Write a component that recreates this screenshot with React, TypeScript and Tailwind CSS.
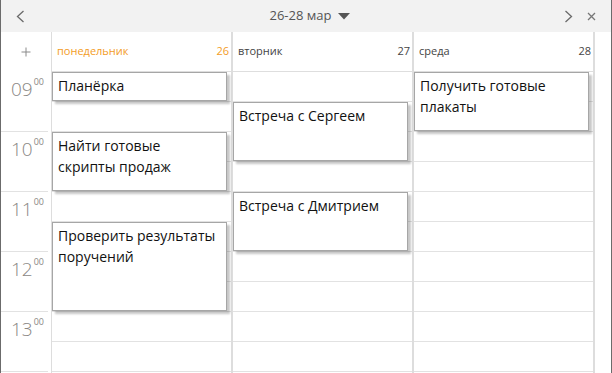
import React from 'react';

type CalEvent = { title: string; start: number; slots: number };

interface Day {
  name: string;
  num: number;
  today?: boolean;
  events: CalEvent[];
}

// start = half-hour slot from 09:00, slots = duration in half-hours
const days: Day[] = [
  {
    name: 'понедельник',
    num: 26,
    today: true,
    events: [
      { title: 'Планёрка', start: 0, slots: 1 },
      { title: 'Найти готовые скрипты продаж', start: 2, slots: 2 },
      { title: 'Проверить результаты поручений', start: 5, slots: 3 },
    ],
  },
  {
    name: 'вторник',
    num: 27,
    events: [
      { title: 'Встреча с Сергеем', start: 1, slots: 2 },
      { title: 'Встреча с Дмитрием', start: 4, slots: 2 },
    ],
  },
  {
    name: 'среда',
    num: 28,
    events: [{ title: 'Получить готовые плакаты', start: 0, slots: 2 }],
  },
];

const hours = ['09', '10', '11', '12', '13'];
const ROW = 30;

function Chevron({ dir }: { dir: 'left' | 'right' }) {
  return (
    <svg width="9" height="13" viewBox="0 0 9 13" fill="none">
      <polyline
        points={dir === 'left' ? '7.5,1 1.5,6.5 7.5,12' : '1.5,1 7.5,6.5 1.5,12'}
        stroke="#6a6a6a"
        strokeWidth="1.3"
      />
    </svg>
  );
}

function DayColumn({ day }: { day: Day }) {
  return (
    <div className="w-[181px] flex-shrink-0 border-r-2 border-[#dddddd] flex flex-col">
      <div
        className={`h-[40px] flex items-center justify-between pl-[5px] pr-[2px] border-b border-[#dedede] text-[11px] ${
          day.today ? 'text-[#f39c1f]' : 'text-[#444444]'
        }`}
      >
        <span>{day.name}</span>
        <span>{day.num}</span>
      </div>
      <div className="relative flex-1">
        {Array.from({ length: 11 }).map((_, i) => (
          <div key={i} className="h-[30px] border-b border-[#e2e2e2]" />
        ))}
        {day.events.map((ev) => (
          <div
            key={ev.title}
            className="absolute left-0 w-[175px] bg-white border border-[#a6a6a6] shadow-[3px_3px_2px_rgba(0,0,0,0.22)] pl-[5px] pt-[2px] pr-[6px] text-[14px] leading-[21px] text-[#111111] overflow-hidden"
            style={{ top: ev.start * ROW, height: ev.slots * ROW - 1 }}
          >
            {ev.title}
          </div>
        ))}
      </div>
    </div>
  );
}

export default function App() {
  return (
    <div
      className="w-[612px] h-[373px] overflow-hidden bg-white border-x border-[#6b6b6b] flex flex-col"
      style={{ fontFamily: '"Open Sans", "Noto Sans", sans-serif' }}
    >
      <div className="h-[32px] flex-shrink-0 bg-[#f2f2f2] flex items-center">
        <div className="w-[40px] pl-[15px] flex items-center">
          <Chevron dir="left" />
        </div>
        <div className="flex-1 flex items-center justify-center pl-[14px] text-[13px] text-[#555555]">
          <span>26-28 мар</span>
          <svg width="12" height="7" viewBox="0 0 12 7" className="ml-[6px]">
            <polygon points="0,0 12,0 6,6.5" fill="#555555" />
          </svg>
        </div>
        <div className="flex items-center pr-[15px] gap-[14px]">
          <Chevron dir="right" />
          <svg width="9" height="9" viewBox="0 0 9 9">
            <path d="M1 1 L8 8 M8 1 L1 8" stroke="#777777" strokeWidth="1.3" />
          </svg>
        </div>
      </div>

      <div className="flex flex-1">
        <div className="w-[51px] flex-shrink-0 border-r border-[#dddddd] flex flex-col">
          <div className="h-[40px] flex items-center justify-center">
            <svg width="10" height="10" viewBox="0 0 10 10">
              <path d="M5 0.5 V9.5 M0.5 5 H9.5" stroke="#8a8a8a" strokeWidth="1" />
            </svg>
          </div>
          {hours.map((h) => (
            <div key={h} className="h-[60px] border-b border-[#e2e2e2] mr-[3px] pl-[10px] pt-[8px] flex items-start text-[#8a8784]">
              <span className="text-[19px] font-light leading-none">{h}</span>
              <span className="text-[9px] leading-none mt-[-3px] ml-[1px]">00</span>
            </div>
          ))}
        </div>
        {days.map((d) => (
          <DayColumn key={d.num} day={d} />
        ))}
        <div className="flex-1" />
      </div>
    </div>
  );
}
